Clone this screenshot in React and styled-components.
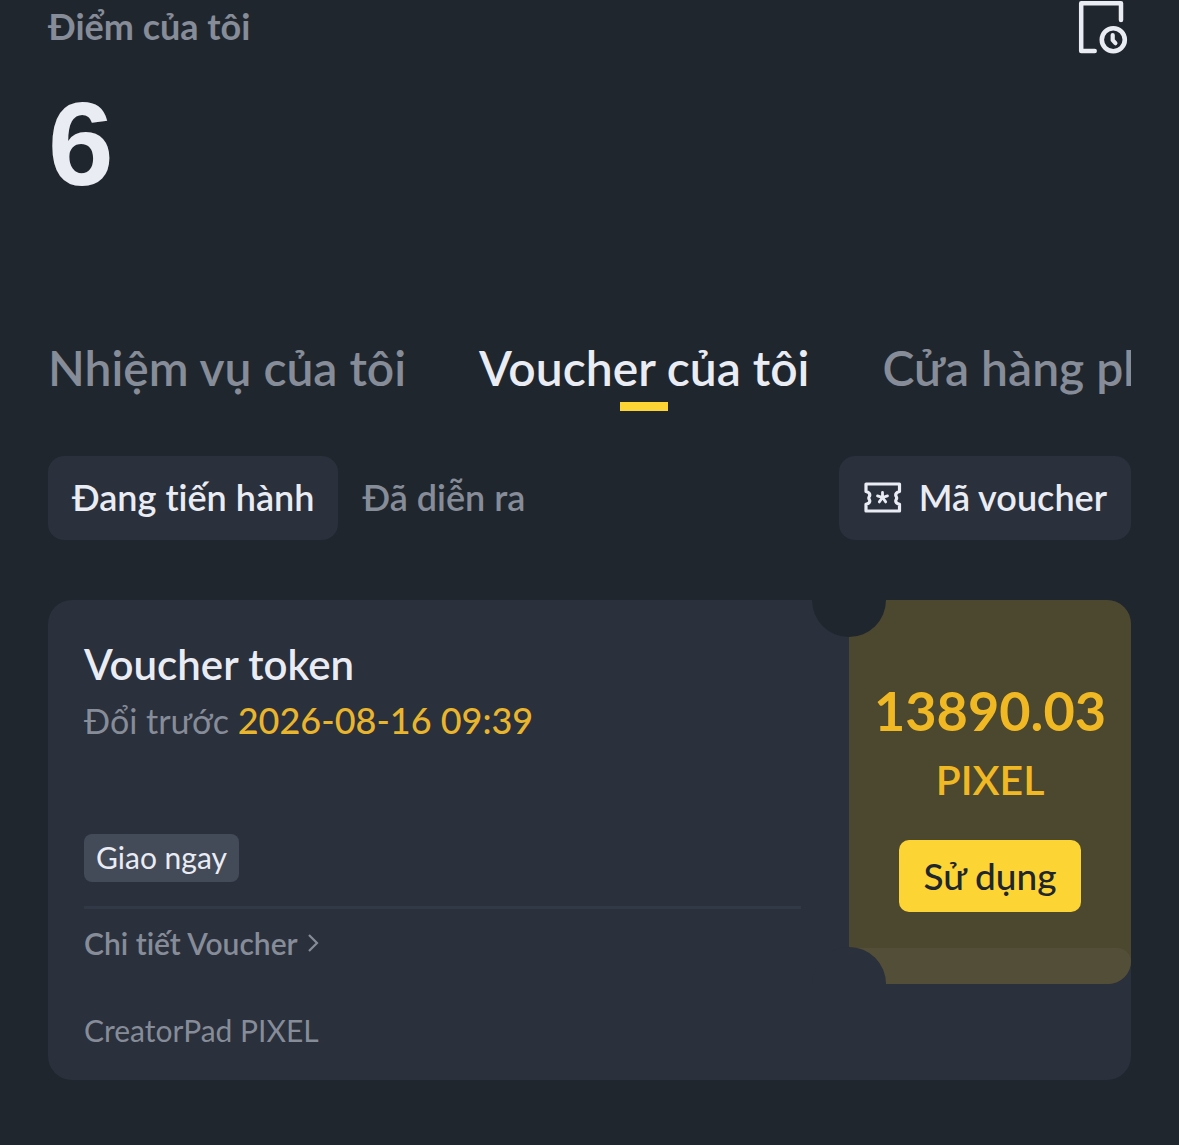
import React from "react";
import styled, { createGlobalStyle } from "styled-components";

const GlobalStyle = createGlobalStyle`
  * {
    box-sizing: border-box;
  }

  body {
    margin: 0;
    background: #20262d;
    color: #eaecf4;
    font-family: Lato, "Open Sans", sans-serif;
    font-variant-ligatures: none;
  }

  button {
    border: 0;
    background: none;
    padding: 0;
    font: inherit;
    color: inherit;
    cursor: pointer;
  }
`;

const Page = styled.main`
  min-height: 100vh;
  padding: 0 48px 64px;
`;

const Header = styled.header`
  display: flex;
  justify-content: space-between;
  height: 56px;
`;

const Label = styled.h1`
  margin: 0;
  font-size: 36px;
  font-weight: 700;
  line-height: 52px;
  color: #868c98;
`;

const HistoryButton = styled.button`
  width: 56px;
  height: 56px;
`;

const Points = styled.p`
  margin: 28px 0 0;
  font-family: "Liberation Sans", sans-serif;
  font-size: 118px;
  font-weight: 700;
  line-height: 120px;
`;

const Tabs = styled.nav`
  display: flex;
  gap: 73px;
  margin-top: 132px;
  overflow: hidden;
`;

const Tab = styled.button`
  flex: none;
  display: flex;
  flex-direction: column;
  align-items: center;
  gap: 2px;
  font-size: 48px;
  font-weight: 600;
  line-height: 64px;
  white-space: nowrap;
  color: ${({ $active }) => ($active ? "#eaecf4" : "#868c98")};

  &::after {
    content: "";
    width: 48px;
    height: 9px;
    background: ${({ $active }) => ($active ? "#fcd535" : "transparent")};
  }
`;

const Filters = styled.div`
  display: flex;
  align-items: center;
  margin-top: 45px;
`;

const Filter = styled.button`
  display: flex;
  align-items: center;
  gap: 16px;
  height: 84px;
  padding: 0 24px 2px;
  border-radius: 16px;
  font-size: 36px;
  font-weight: 600;
  background: ${({ $filled }) => ($filled ? "#2a303c" : "transparent")};
  color: ${({ $filled }) => ($filled ? "#eaecf4" : "#868c98")};
`;

const Spacer = styled.div`
  flex: 1;
`;

const Card = styled.article`
  margin-top: 60px;
  border-radius: 24px;
  background: #2a303c;
`;

const Ticket = styled.div`
  display: flex;
  min-height: 384px;
`;

const Info = styled.div`
  flex: 1;
  display: flex;
  flex-direction: column;
  align-items: flex-start;
  padding: 38px 48px 0 36px;
`;

const Title = styled.h2`
  margin: 0;
  font-size: 42px;
  font-weight: 600;
  line-height: 52px;
`;

const Expiry = styled.p`
  margin: 2px 0 0;
  font-size: 34px;
  line-height: 56px;
  color: #868c98;

  & time {
    font-size: 36px;
    font-weight: 500;
    color: #e9b52c;
  }
`;

const Tag = styled.span`
  height: 48px;
  margin-top: 85px;
  padding: 0 12px;
  border-radius: 8px;
  font-size: 30px;
  line-height: 46px;
  background: #434a58;
`;

const Divider = styled.hr`
  width: 100%;
  height: 3px;
  margin: 24px 0 14px;
  border: 0;
  background: #323946;
`;

const Details = styled.a`
  display: flex;
  align-items: center;
  gap: 8px;
  font-size: 30px;
  font-weight: 600;
  line-height: 40px;
  color: #868c98;
  text-decoration: none;
`;

const Value = styled.div`
  position: relative;
  width: 282px;
  display: flex;
  flex-direction: column;
  align-items: center;
  padding-top: 80px;
  border-radius: 0 24px 24px 0;
  background: #4c472f;

  &::before {
    content: "";
    position: absolute;
    right: 0;
    bottom: 0;
    left: 0;
    height: 36px;
    border-radius: 0 14px 24px 0;
    background: #534e38;
  }
`;

const Notch = styled.span`
  position: absolute;
  left: -37px;
  width: 74px;
  height: 37px;
  ${({ $side }) =>
    $side === "top"
      ? "top: 0; border-radius: 0 0 37px 37px; background: #20262d;"
      : "bottom: 0; border-radius: 37px 37px 0 0; background: #2a303c;"}
`;

const Amount = styled.strong`
  font-size: 54px;
  font-weight: 700;
  line-height: 62px;
  color: #f0b924;
`;

const Unit = styled.span`
  margin-top: 12px;
  font-size: 41px;
  font-weight: 600;
  line-height: 52px;
  color: #f0b924;
`;

const UseButton = styled.button`
  height: 72px;
  margin-top: 34px;
  padding: 0 24px 2px;
  border-radius: 10px;
  font-size: 37px;
  font-weight: 500;
  background: #fcd535;
  color: #202630;
`;

const Source = styled.p`
  margin: 0;
  padding: 26px 36px 30px;
  font-size: 30px;
  line-height: 40px;
  color: #868c98;
`;

function HistoryIcon() {
  return (
    <svg width="56" height="56" viewBox="0 0 56 56" fill="none" stroke="#eaecf4" strokeWidth="4.500" strokeLinecap="round" strokeLinejoin="round">
      <path d="M46 20V3.200H6.200V51h13.500" />
      <circle cx="38.300" cy="39.700" r="11.500" strokeWidth="4.600" />
      <path d="M37.700 35v5.200l2.700 3" strokeWidth="4.200" />
    </svg>
  );
}

function VoucherIcon() {
  return (
    <svg width="40" height="32" viewBox="0 0 40 32" fill="none" stroke="#eaecf4" strokeWidth="3.200" strokeLinecap="round" strokeLinejoin="round">
      <path d="M3 3h33.500v7.500c-2.200.600-3.800 2.300-3.800 3.500 0 1.400 1 1.600 1 3s-1 1.600-1 3c0 1.200 1.600 2.700 3.800 3.300V30H3v-6.700c2.200-.600 3.800-2.100 3.800-3.300 0-1.400-1-1.600-1-3s1-1.600 1-3c0-1.200-1.600-2.900-3.800-3.500z" />
      <path d="M19.500 16.500v-5M19.500 16.500l5-1.600M19.500 16.500l3.200 4.400M19.500 16.500l-3.200 4.400M19.500 16.500l-5-1.600" strokeWidth="2.800" />
    </svg>
  );
}

function Chevron() {
  return (
    <svg width="14" height="20" viewBox="0 0 14 20" fill="none" stroke="#868c98" strokeWidth="2.200">
      <path d="M3 2l8 8-8 8" />
    </svg>
  );
}

const tabs = ["Nhiệm vụ của tôi", "Voucher của tôi", "Cửa hàng phần thưởng"];

function VoucherCard({ voucher }) {
  const { title, expires, tag, amount, unit, source } = voucher;
  return (
    <Card>
      <Ticket>
        <Info>
          <Title>{title}</Title>
          <Expiry>
            Đổi trước <time>{expires}</time>
          </Expiry>
          <Tag>{tag}</Tag>
          <Divider />
          <Details href="#voucher">
            Chi tiết Voucher
            <Chevron />
          </Details>
        </Info>
        <Value>
          <Notch $side="top" />
          <Notch $side="bottom" />
          <Amount>{amount}</Amount>
          <Unit>{unit}</Unit>
          <UseButton>Sử dụng</UseButton>
        </Value>
      </Ticket>
      <Source>{source}</Source>
    </Card>
  );
}

export default function App() {
  return (
    <>
      <GlobalStyle />
      <Page>
        <Header>
          <Label>Điểm của tôi</Label>
          <HistoryButton aria-label="Lịch sử">
            <HistoryIcon />
          </HistoryButton>
        </Header>
        <Points>6</Points>
        <Tabs>
          {tabs.map((tab, i) => (
            <Tab key={tab} $active={i === 1}>
              {tab}
            </Tab>
          ))}
        </Tabs>
        <Filters>
          <Filter $filled>Đang tiến hành</Filter>
          <Filter>Đã diễn ra</Filter>
          <Spacer />
          <Filter $filled>
            <VoucherIcon />
            Mã voucher
          </Filter>
        </Filters>
        <VoucherCard
          voucher={{
            title: "Voucher token",
            expires: "2026-08-16 09:39",
            tag: "Giao ngay",
            amount: "13890.03",
            unit: "PIXEL",
            source: "CreatorPad PIXEL",
          }}
        />
      </Page>
    </>
  );
}
